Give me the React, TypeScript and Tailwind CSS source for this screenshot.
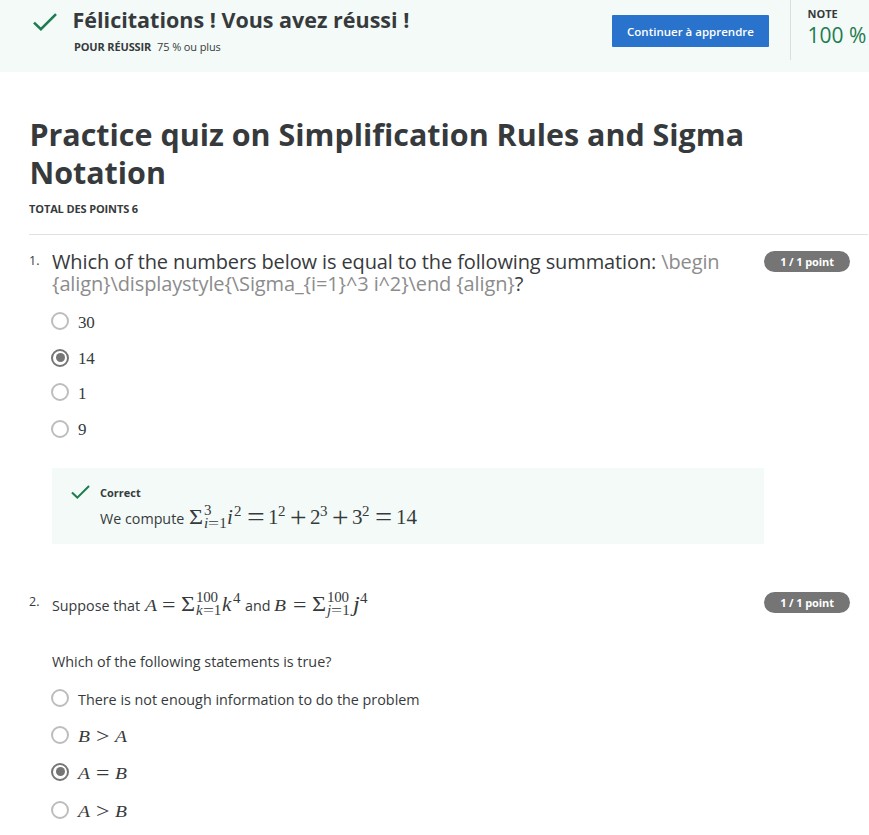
import React from "react";

function Check({ className }: { className: string }) {
  return (
    <svg viewBox="0 0 24 18" className={className} fill="none" stroke="#1d7c50" strokeWidth="2.6">
      <path d="M1 9.6 L7.9 16.2 L23 1.2" />
    </svg>
  );
}

// One math glyph run inside a cell of fixed advance width.
function G({ w, c = "", children }: { w: string; c?: string; children: React.ReactNode }) {
  return (
    <span className={`inline-block whitespace-nowrap ${w}`}>
      <span className={`inline-block origin-left ${c}`}>{children}</span>
    </span>
  );
}

const mathFont = "font-['Liberation_Serif',serif] text-[#373a3c] whitespace-nowrap";

function Limits({ top, bottom, w }: { top: string; bottom: React.ReactNode; w: string }) {
  return (
    <span className={`inline-flex h-[27px] flex-col align-[9px] text-[15px] ${w}`}>
      <span className="h-[14px] leading-[14px] tracking-[-0.3px]">{top}</span>
      <span className="h-[13px] leading-[13px]">{bottom}</span>
    </span>
  );
}

function Sup({ children, w }: { children: React.ReactNode; w: string }) {
  return <span className={`inline-block align-[8px] text-[15px] leading-none ${w}`}>{children}</span>;
}

function Option({ checked, className, children }: { checked?: boolean; className: string; children: React.ReactNode }) {
  return (
    <label className={`flex items-center gap-[9px] ${className}`}>
      <span
        className={`flex size-[18px] shrink-0 items-center justify-center rounded-full border-2 ${
          checked ? "border-[#757575]" : "border-[#bdbdbd]"
        }`}
      >
        {checked && <span className="size-[9px] rounded-full bg-[#757575]" />}
      </span>
      {children}
    </label>
  );
}

function Num({ children }: { children: string }) {
  return <span className={`${mathFont} relative top-px text-[17px] leading-none tracking-[-0.3px]`}>{children}</span>;
}

function Relation({ a, op, b }: { a: string; op: string; b: string }) {
  return (
    <span className={`${mathFont} relative top-[2px] flex text-[17px] leading-none`}>
      <G w="w-[18px]" c="italic scale-x-115">{a}</G>
      <G w="w-[19px]" c="scale-x-140 scale-y-125">{op}</G>
      <G w="w-[14px]" c="italic scale-x-115">{b}</G>
    </span>
  );
}

function Badge() {
  return (
    <span className="flex h-[21px] w-[86px] shrink-0 items-center justify-center rounded-full bg-[#757575] pt-px text-[11px] tracking-[-0.1px] font-bold text-white">
      1 / 1 point
    </span>
  );
}

export default function App() {
  return (
    <div className="h-[835px] w-[869px] overflow-hidden bg-white font-['Open_Sans','Noto_Sans',sans-serif] text-[#373a3c]">
      <header className="flex h-[72px] bg-[#f3faf8]">
        <Check className="mt-[13px] ml-[33px] h-[18px] w-[24px]" />
        <div className="ml-[15px] w-[540px] pt-[5px]">
          <h2 className="pl-[0.5px] text-[21.5px] leading-[30px] font-bold whitespace-nowrap">Félicitations ! Vous avez réussi !</h2>
          <p className="ml-[2px] flex gap-[6px] text-[11px] leading-[24px]">
            <b className="tracking-[-0.15px]">POUR RÉUSSIR</b>
            <span className="tracking-[-0.12px]">75 % ou plus</span>
          </p>
        </div>
        <button className="mt-[15px] h-[32px] w-[157px] shrink-0 rounded-[1px] bg-[#2a73cc] pt-px text-[11.5px] font-semibold whitespace-nowrap text-white">
          Continuer à apprendre
        </button>
        <div className="ml-[21px] h-[60px] shrink-0 border-l border-[#dadedd] pl-[16.5px]">
          <div className="pt-[6px] text-[11px] leading-[16px] font-bold">NOTE</div>
          <div className="text-[21px] leading-[26px] whitespace-nowrap text-[#1d7c50]">100 %</div>
        </div>
      </header>

      <main className="pl-[29px]">
        <h1 className="h-[118px] pt-[43px] pl-[0.4px] text-[30.45px] leading-[38px] font-bold">
          <span className="block whitespace-nowrap">Practice quiz on Simplification Rules and Sigma</span>
          <span className="block">Notation</span>
        </h1>
        <div className="mr-px h-[45px] border-b border-[#e1e1e1] pt-[9px] text-[11px] leading-[20px] tracking-[-0.12px] font-bold">
          TOTAL DES POINTS 6
        </div>

        <section className="flex h-[354px] pt-[16px]">
          <div className="w-[23px] text-[12.5px] leading-[20px]">1.</div>
          <div className="w-[712px]">
            <p className="h-[52px] text-[20px] leading-[22px] tracking-[-0.12px] whitespace-nowrap">
              Which of the numbers below is equal to the following summation: <span className="text-[#8c8c8c]">\begin</span>
              <br />
              <span className="text-[#8c8c8c]">{"{align}\\displaystyle{\\Sigma_{i=1}^3 i^2}\\end {align}"}</span>?
            </p>
            <div className="-mt-px -ml-px">
              <Option className="h-[38px]"><Num>30</Num></Option>
              <Option className="h-[35px]" checked><Num>14</Num></Option>
              <Option className="h-[34px]"><Num>1</Num></Option>
              <Option className="h-[39px]"><Num>9</Num></Option>
            </div>
            <div className="mt-[20px] flex h-[76px] bg-[#f3faf8]">
              <Check className="mt-[17px] ml-[19px] h-[14px] w-[19px]" />
              <div className="ml-[10px] pt-[15px]">
                <div className="text-[11px] leading-[20px] font-bold">Correct</div>
                <div className="-mt-px flex h-[30px] items-baseline text-[14.3px] leading-[30px]">
                  <span className="w-[89px] whitespace-nowrap">We compute</span>
                  <span className={`${mathFont} text-[21px]`}>
                    <G w="w-[15px]" c="scale-x-115">Σ</G>
                    <Limits w="w-[23px]" top="3" bottom={<><i>i</i><G w="w-[11px]" c="scale-x-130">=</G>1</>} />
                    <G w="w-[7px]" c="italic">i</G>
                    <Sup w="w-[13px]">2</Sup>
                    <G w="w-[21px]" c="scale-x-150 scale-y-125">=</G>
                    <G w="w-[10px]">1</G>
                    <Sup w="w-[12px]">2</Sup>
                    <G w="w-[20px]" c="scale-x-140 scale-y-140">+</G>
                    <G w="w-[10px]">2</G>
                    <Sup w="w-[12px]">3</Sup>
                    <G w="w-[20px]" c="scale-x-140 scale-y-140">+</G>
                    <G w="w-[10px]">3</G>
                    <Sup w="w-[13px]">2</Sup>
                    <G w="w-[21px]" c="scale-x-145 scale-y-125">=</G>
                    <G w="w-[21px]">14</G>
                  </span>
                </div>
              </div>
            </div>
          </div>
          <Badge />
        </section>

        <section className="flex">
          <div className="w-[23px] pt-[3px] text-[12.5px] leading-[20px]">2.</div>
          <div className="w-[712px]">
            <div className="-mt-px flex h-[62px] items-baseline text-[14.3px] leading-[32px]">
              <span className="w-[93px] whitespace-nowrap">Suppose that</span>
              <span className={`${mathFont} text-[17px]`}>
                <G w="w-[17px]" c="italic scale-x-115">A</G>
                <G w="w-[19px]" c="scale-x-140 scale-y-125">=</G>
                <G w="w-[15px]" c="text-[21px] scale-x-115">Σ</G>
                <Limits w="w-[26px]" top="100" bottom={<><i>k</i><G w="w-[11px]" c="scale-x-130">=</G>1</>} />
                <G w="w-[11px]" c="text-[21px] italic">k</G>
                <Sup w="w-[12px]">4</Sup>
              </span>
              <span className="w-[29px]">and</span>
              <span className={`${mathFont} text-[17px]`}>
                <G w="w-[19px]" c="italic scale-x-115">B</G>
                <G w="w-[19px]" c="scale-x-140 scale-y-125">=</G>
                <G w="w-[15px]" c="text-[21px] scale-x-115">Σ</G>
                <Limits w="w-[26px]" top="100" bottom={<><i>j</i><G w="w-[11px]" c="scale-x-130">=</G>1</>} />
                <G w="w-[7px]" c="text-[21px] italic scale-x-115">j</G>
                <Sup w="w-[12px]">4</Sup>
              </span>
            </div>
            <p className="h-[29px] text-[14.35px] leading-[24px]">Which of the following statements is true?</p>
            <div className="-ml-px">
              <Option className="h-[37px]">
                <span className="relative top-[2px] text-[14.35px]">There is not enough information to do the problem</span>
              </Option>
              <Option className="h-[37px]"><Relation a="B" op=">" b="A" /></Option>
              <Option className="h-[37px]" checked><Relation a="A" op="=" b="B" /></Option>
              <Option className="h-[39px]"><Relation a="A" op=">" b="B" /></Option>
            </div>
          </div>
          <div className="pt-[3px]"><Badge /></div>
        </section>
      </main>
    </div>
  );
}
